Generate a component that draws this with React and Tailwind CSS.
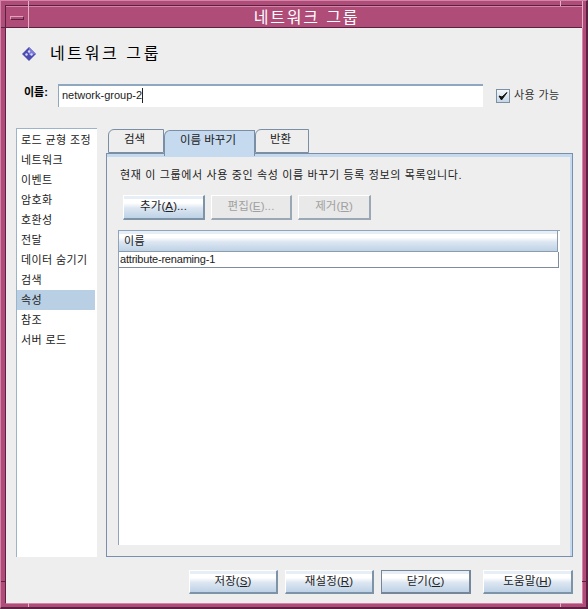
const FONT = "font-['Liberation_Sans','Noto_Sans_CJK_KR',sans-serif]";
const GRAD = "bg-[linear-gradient(180deg,#e8eef5_0%,#e8eef5_14%,#ffffff_15%,#ffffff_32%,#dce6f1_55%,#bed2e6_100%)]";
const items = ["로드 균형 조정","네트워크","이벤트","암호화","호환성","전달","데이터 숨기기","검색","속성","참조","서버 로드"];

function U({ children }) {
  return <span className="underline underline-offset-1">{children}</span>;
}

function Btn({ w, label, k, tail = "", disabled, focus, h = "h-[25px]" }) {
  return (
    <button
      className={`${w} ${h} shrink-0 flex items-center justify-center text-[11.5px] tracking-[0.1px] border-t border-l border-r-2 border-b-2 ${
        focus ? "border-[#75859a]" : disabled ? "border-t-white border-l-white border-r-[#9aa7b5] border-b-[#9aa7b5]" : "border-t-white border-l-white border-r-[#7d93a8] border-b-[#7d93a8]"
      } ${disabled ? "bg-[#e9e9e9] text-[#a0a0a0]" : `${GRAD} text-[#222222]`}`}
    >
      {label}(<U>{k}</U>){tail}
    </button>
  );
}

function Tab({ w, active, children }) {
  return (
    <div
      className={`${w} shrink-0 flex items-center justify-center text-[11.5px] text-[#222222] border-t border-r border-[#7a8fa6] rounded-tl-[6px] border-l pr-[3px] ${
        active ? "bg-[#c5d9ef] h-[26px] -mb-[3px] pb-[5px] z-10 border-b-0" : "h-[24px] pb-[2px] bg-[#eeeeee] border-b border-b-[#7a8fa6]"
      }`}
    >
      {children}
    </div>
  );
}

export default function App() {
  return (
    <div className={`${FONT} relative w-[588px] h-[609px] overflow-hidden bg-[#b04c78] border-t border-l border-t-[#d484a8] border-l-[#d484a8] border-r-2 border-b-2 border-r-[#5a2142] border-b-[#5a2142] pt-[4px] pl-[4px] pr-[3px] pb-[3px]`}>
      <div className="w-full h-full flex flex-col border-t border-l border-[#5a2142] border-r border-b border-r-[#d484a8] border-b-[#d484a8] bg-[#eeeeee]">
        {/* Title bar */}
        <div className="h-[22px] shrink-0 flex items-center bg-[#b04c78] border-t border-t-[#d484a8] border-b border-b-[#5a2142] pl-[4px] pr-0">
          <div className="w-[14px] h-[4px] mt-[2px] bg-[#b04c78] border border-t-[#e4a0bc] border-l-[#e4a0bc] border-r-[#5a2142] border-b-[#5a2142] shrink-0" />
          <div className="flex-1 text-center text-[16px] leading-none tracking-[1.8px] text-white pt-[2px] pl-[7px]">네트워크 그룹</div>
        </div>

        {/* Heading */}
        <div className="h-[50px] shrink-0 flex items-center pl-[16px] pt-[2px]">
          <svg width="14" height="14" viewBox="0 0 14 14" className="shrink-0">
            <polygon points="7,0 14,7 7,14 0,7" fill="#4b4bb0" />
            <polygon points="7,0 14,7 7,8" fill="#7c7cd8" />
            <circle cx="7" cy="4.5" r="1.2" fill="#d8d8ff" />
            <circle cx="4.5" cy="7.5" r="1.2" fill="#d8d8ff" />
            <circle cx="9.5" cy="7.5" r="1.2" fill="#d8d8ff" />
          </svg>
          <span className="ml-[14px] text-[16px] tracking-[2.6px] text-black">네트워크 그룹</span>
        </div>

        {/* Name row */}
        <div className="h-[23px] mt-[6px] shrink-0 flex items-center pl-[18px]">
          <span className="w-[34px] text-[11px] font-bold text-black -mt-[6px]">이름:</span>
          <div className="w-[425px] h-[23px] flex items-center bg-white border-t-2 border-l border-t-[#8fa8c0] border-l-[#8fa8c0] pl-[3px] pb-[2px] text-[11px] text-[#222222]">
            network-group-2<span className="w-px h-[15px] bg-[#222222]" />
          </div>
          <div className="ml-[13px] w-[14px] h-[14px] flex items-center justify-center bg-[linear-gradient(180deg,#f4f7fb,#c5d6e8)] border border-[#7d8fa3] shrink-0">
            <svg width="10" height="10" viewBox="0 0 10 10"><path d="M1 5 L3.5 9 L9 1.5 L4 6 Z" fill="#111111" stroke="#111111" strokeWidth="1" /></svg>
          </div>
          <span className="ml-[4px] text-[11px] tracking-[0.4px] text-[#333333]">사용 가능</span>
        </div>

        {/* Body */}
        <div className="flex-1 min-h-0 flex pl-[10px] pt-[21px]">
          <div className="w-[81px] h-[429px] shrink-0 bg-white border-t border-l border-[#9db3c8] pt-[1px] pl-0">
            {items.map((t) => (
              <div key={t} className={`h-[20px] w-[78px] flex items-center pl-[4px] text-[11px] tracking-[0.4px] whitespace-nowrap text-[#222222] ${t === "속성" ? "bg-[#b8cfe4]" : ""}`}>
                {t}
              </div>
            ))}
          </div>

          <div className="w-[467px] ml-[9px] h-[429px] shrink-0 flex flex-col">
            <div className="flex h-[25px] pl-[2px] items-end shrink-0">
              <Tab w="w-[56px]">검색</Tab>
              <Tab w="w-[91px]" active>이름 바꾸기</Tab>
              <Tab w="w-[54px]">반환</Tab>
            </div>
            <div className="flex-1 min-h-0 flex flex-col border border-[#7a8fb0] border-t-[#7a8fa6] bg-[#eeeeee]">
              <div className="flex-1 min-h-0 flex flex-col border-t-[3px] border-r-[2px] border-t-[#c5d9ef] border-r-[#c5d9ef] pl-[11px] pr-[11px]">
                <div className="h-[35px] shrink-0 flex items-center pl-[2px] pt-[1px] text-[11px] text-[#222222] tracking-[0.65px] whitespace-nowrap">현재 이 그룹에서 사용 중인 속성 이름 바꾸기 등록 정보의 목록입니다.</div>
                <div className="flex gap-[6px] pl-[5px] shrink-0 mt-[3px]">
                  <Btn w="w-[82px]" label="추가" k="A" tail="..." />
                  <Btn w="w-[81px]" label="편집" k="E" tail="..." disabled />
                  <Btn w="w-[73px]" label="제거" k="R" disabled />
                </div>
                <div className="mt-[10px] h-[315px] w-[442px] shrink-0 bg-white border-t border-l border-[#8ea4ba]">
                  <div className={`h-[21px] w-[439px] flex items-center pl-[5px] text-[11px] tracking-[0.4px] text-[#222222] border-r border-b border-[#8e9bab] ${GRAD}`}>이름</div>
                  <div className="h-[16px] w-[440px] flex items-center pl-px pb-px text-[11px] tracking-[-0.2px] text-[#222222] border-r border-b border-[#7f8c9a]">attribute-renaming-1</div>
                </div>
              </div>
            </div>
          </div>
        </div>

        {/* Footer */}
        <div className="h-[46px] shrink-0 flex pl-[183px] pt-[13px]">
          <Btn w="w-[89px]" h="h-[24px]" label="저장" k="S" />
          <div className="w-[7px]" />
          <Btn w="w-[89px]" h="h-[24px]" label="재설정" k="R" />
          <div className="w-[7px]" />
          <Btn w="w-[90px]" h="h-[24px]" label="닫기" k="C" focus />
          <div className="w-[12px]" />
          <Btn w="w-[90px]" h="h-[24px]" label="도움말" k="H" />
        </div>
      </div>

      {/* Window-manager corner ticks laid over the frame */}
      <div className="absolute left-[27px] top-0 w-px h-[27px] bg-[#e4b0c6]" />
      <div className="absolute left-[559px] top-0 w-px h-[5px] bg-[#e4b0c6]" />
      <div className="absolute left-[581px] top-0 w-px h-[27px] bg-[#e4b0c6]" />
      <div className="absolute left-0 top-[26px] w-[5px] h-px bg-[#5a2142]" />
      <div className="absolute left-[27px] top-[602px] w-px h-[5px] bg-[#e4b0c6]" />
      <div className="absolute left-[559px] top-[602px] w-px h-[5px] bg-[#e4b0c6]" />
      <div className="absolute left-0 top-[580px] w-[5px] h-px bg-[#5a2142]" />
      <div className="absolute left-[581px] top-[580px] w-[5px] h-px bg-[#5a2142]" />
    </div>
  );
}
